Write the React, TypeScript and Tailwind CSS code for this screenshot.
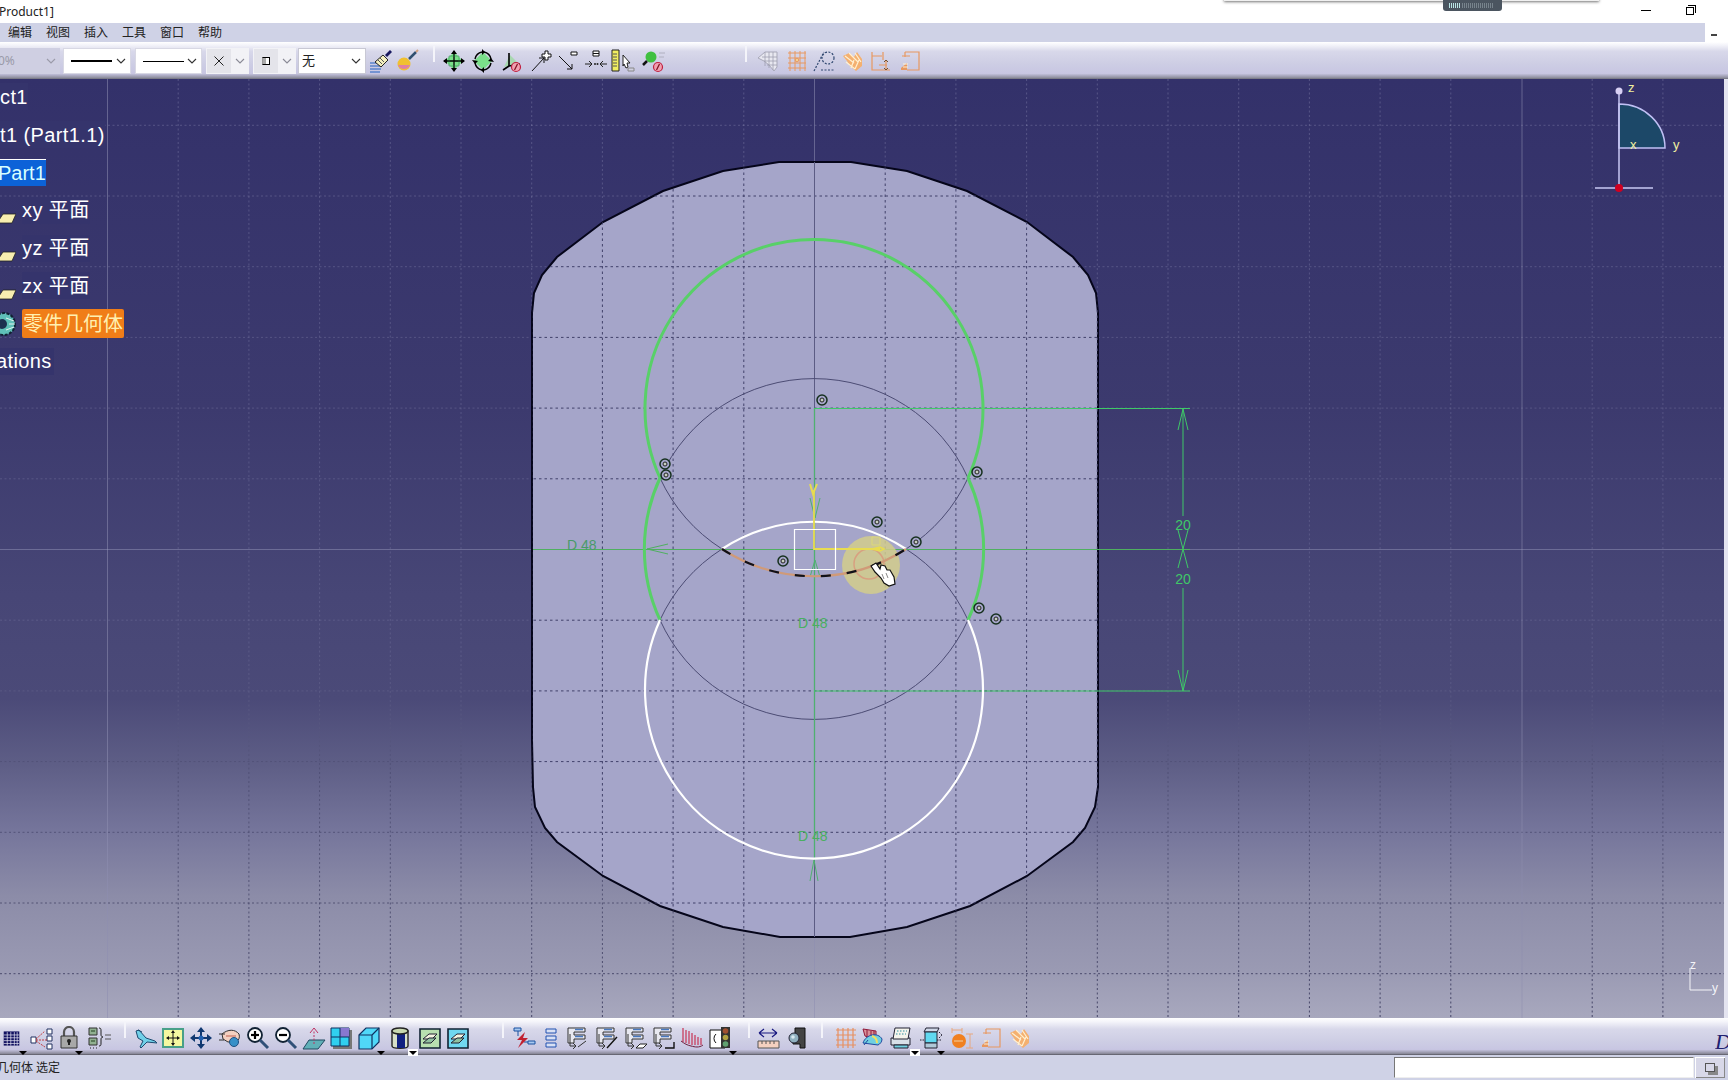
import React from "react";

const uiFont = "font-['Noto_Sans','Noto_Sans_CJK_SC',sans-serif]";

const Svg: React.FC<{ children: React.ReactNode }> = ({ children }) => (
  <svg width={24} height={24} viewBox="0 0 24 24" fill="none" className="shrink-0">
    {children}
  </svg>
);

const Slot: React.FC<{ className: string; caret?: boolean; caretBg?: boolean; children: React.ReactNode }> = ({
  className,
  caret,
  caretBg,
  children,
}) => (
  <div className={`relative flex h-[24px] shrink-0 items-center justify-center ${className}`}>
    {children}
    {caret && (
      <span
        className={`absolute right-[-2px] bottom-[-6px] flex h-[7px] w-[10px] items-center justify-center ${
          caretBg ? "bg-white" : ""
        }`}
      >
        <span className="h-0 w-0 border-x-[4px] border-t-[4px] border-x-transparent border-t-black" />
      </span>
    )}
  </div>
);

const Sep: React.FC<{ className: string }> = ({ className }) => (
  <div className={`h-[16px] w-[2px] shrink-0 self-start bg-[#f4f4fa] ${className}`} />
);

const Forbid = ({ x = 17, y = 18 }: { x?: number; y?: number }) => (
  <g>
    <circle cx={x} cy={y} r={4.5} fill="#f0a0b0" stroke="#c02040" strokeWidth={1.2} />
    <path d={`M${x - 1.5} ${y + 3}l3 -6`} stroke="#801020" strokeWidth={1.2} />
  </g>
);

const IconBrush = () => (
  <Svg>
    <path d="M1 14h13M1 17h12M1 20h11M1 23h10" stroke="#2060c0" />
    <path d="M6 13l8-7 5 5-7 7z" fill="#f4f0c0" stroke="#222" />
    <path d="M9 11l4 4M11 9l4 4" stroke="#555" />
    <path d="M16 6l5-5 2 2-5 5z" fill="#181860" />
  </Svg>
);
const IconBall = () => (
  <Svg>
    <circle cx={8} cy={15} r={6.5} fill="#f0c030" />
    <path d="M2 16a6.5 6.5 0 0 0 12 0z" fill="#e080a0" />
    <path d="M13 10l7-7" stroke="#305070" strokeWidth={2.5} />
    <path d="M20 3l2-2" stroke="#d0a080" strokeWidth={2} />
  </Svg>
);
const IconMove = () => (
  <Svg>
    <path d="M12 3l9 9-9 9-9-9z" fill="#7adf8a" />
    <path d="M12 2v20M2 12h20" stroke="#000" strokeWidth={1.3} />
    <path d="M12 1l-3 4h6zM12 23l-3-4h6zM1 12l4-3v6zM23 12l-4-3v6z" fill="#000" />
    <path d="M7 7h10v10H7z" stroke="#208040" strokeWidth={0.5} />
  </Svg>
);
const IconRotate = () => (
  <Svg>
    <path d="M12 3l9 9-9 9-9-9z" fill="#7adf8a" />
    <path d="M4 10a9 9 0 0 1 7-7M13 3a9 9 0 0 1 7 7M20 14a9 9 0 0 1-7 7M11 21a9 9 0 0 1-7-7" stroke="#000" strokeWidth={1.4} />
    <path d="M11 0l3 3-3 3zM1 11l6 1-3 3zM23 13l-6-1 3-3zM13 24l-3-3 3-3z" fill="#000" />
  </Svg>
);
const IconAxisForbid = () => (
  <Svg>
    <path d="M3 18L9 6l9 9z" fill="#a8d8b0" />
    <path d="M8 17V4M8 17l11-2M8 17l-6 4" stroke="#000" strokeWidth={1.6} />
    <Forbid x={15} y={18} />
  </Svg>
);
const IconArrowPlus = () => (
  <Svg>
    <path d="M3 22L15 9M15 9h-5M15 9v5" stroke="#111" />
    <path d="M16 2h3v3h3v3h-3v3h-3V8h-3V5h3z" fill="#fff" stroke="#111" />
  </Svg>
);
const IconArrowMinus = () => (
  <Svg>
    <path d="M3 7l13 13M16 20h-5M16 20v-5" stroke="#111" />
    <path d="M15 3h6v3h-6z" fill="#fff" stroke="#111" />
  </Svg>
);
const IconEqual = () => (
  <Svg>
    <path d="M9 2h6v5H9zM9 4.500h6" fill="#fff" stroke="#111" />
    <path d="M1 15h7M5 12l3 3-3 3M23 15h-7M19 12l-3 3 3 3" stroke="#222" />
    <circle cx={11} cy={15} r={1} fill="#222" />
    <circle cx={13.500} cy={15} r={1} fill="#222" />
  </Svg>
);
const IconRuler = () => (
  <Svg>
    <path d="M1 1h7v21H1z" fill="#f0ee60" stroke="#222" />
    <path d="M2 5h4M2 8h4M2 11h4M2 14h4M2 17h4" stroke="#555" />
    <path d="M12 6l7 8h-3l1 4-2 1-2-4-1 2z" fill="#fff" stroke="#222" />
    <path d="M17 19h6v3h-6z" fill="#d0d0e0" stroke="#888" />
  </Svg>
);
const IconMagForbid = () => (
  <Svg>
    <circle cx={9} cy={8} r={5.500} fill="#40c040" />
    <path d="M5 12l-4 4" stroke="#111" strokeWidth={2.500} />
    <path d="M17 4h6M17 8h5" stroke="#b0b0c0" />
    <Forbid x={16} y={18} />
  </Svg>
);
const IconMesh = () => (
  <Svg>
    <path d="M2 9l7-6h12v15l-3 4-5-6-5-4z" fill="#e8e8f0" stroke="#a8a8b8" />
    <path d="M9 3v14M13 3v16M17 3v18M6 8h15M8 12h13M11 16h10" stroke="#a0a0b0" strokeWidth={0.8} />
  </Svg>
);
const IconGridOrange = () => (
  <Svg>
    <path d="M3 4h18M3 9h18M3 14h18M3 19h18M5 2v20M10 2v20M15 2v20M20 2v20" stroke="#e89860" />
    <circle cx={12} cy={11} r={1.800} fill="#f4d090" stroke="#e89860" />
  </Svg>
);
const IconDotted = () => (
  <Svg>
    <path d="M2 22L12 3M9 21h14" stroke="#304870" strokeWidth={1.200} strokeDasharray="2 1.500" />
    <circle cx={16} cy={9} r={6} stroke="#304870" strokeWidth={1.200} strokeDasharray="2 1.500" />
  </Svg>
);
const IconOrangeHand = () => (
  <Svg>
    <path d="M2 7l6-3 5 4 3-5 5 7v7l-6 5-6-5-3-5z" fill="#f4b070" />
    <path d="M4 7l9 7M8 4l9 9M14 4l6 9M5 13l9 7M13 11l-3 8M18 11l-4 9" stroke="#fff0d0" strokeWidth={1.200} />
  </Svg>
);
const IconDimOrange = () => (
  <Svg>
    <path d="M3 3v18h18M3 7h10M14 3v8M17 12v9M10 16h8" stroke="#e89860" strokeWidth={1.200} />
    <path d="M15 13l2-2 2 2M15 19l2 2 2-2" stroke="#705030" />
  </Svg>
);
const IconDimOrange2 = () => (
  <Svg>
    <path d="M6 3h14v18H8M3 7h8M20 8v8M6 3v5" stroke="#e89860" strokeWidth={1.200} />
    <path d="M2 19l6-5v7H2z" fill="#e89860" />
    <path d="M4 15h5M4 18h5" stroke="#fff0d0" />
  </Svg>
);
const IconTable = () => (
  <svg width={17} height={17} viewBox="0 0 24 24" fill="none" className="shrink-0">
    <path d="M1 2h22v20H1z" fill="#101060" />
    <path d="M1 7h22M1 11h22M1 15h22M1 19h22M6 3v19M11 3v19M16 3v19M20 3v19" stroke="#e8e8f4" />
  </svg>
);
const IconTree = () => (
  <Svg>
    <path d="M2 11h5v6H2zM18 3h5v5h-5zM18 10h5v5h-5zM18 18h5v5h-5z" fill="#fff" stroke="#203060" />
    <path d="M7 14h11M7 13l9-8M7 15l9 6" stroke="#c03030" strokeWidth={0.900} strokeDasharray="2 1" />
  </Svg>
);
const IconLock = () => (
  <Svg>
    <path d="M7 10V6a5 5 0 0 1 10 0v4" stroke="#555" strokeWidth={2.200} />
    <path d="M4 10h16v12H4z" fill="#a8a8a8" stroke="#333" />
    <circle cx={12} cy={15} r={2} fill="#222" />
    <path d="M11 15h2v4h-2z" fill="#222" />
  </Svg>
);
const IconBrace = () => (
  <Svg>
    <path d="M1 2h8v7H1zM1 12h8v7H1z" fill="#90b090" stroke="#333" />
    <path d="M3 5h4M3 15h4" stroke="#204020" />
    <path d="M2 22h1M5 22h1M8 22h1" stroke="#222" />
    <path d="M11 2c2 0 2 1 2 3v4c0 1 1 2 2 2-1 0-2 1-2 2v4c0 2 0 3-2 3" stroke="#222" />
    <path d="M17 9h6M17 13h6" stroke="#555" />
  </Svg>
);
const IconPlane = () => (
  <Svg>
    <path d="M2 5l3-1 7 8 9 3 2 2-10-1-6 6-1-1 3-6-5-3z" fill="#70d0e8" stroke="#1c4a70" />
    <path d="M4 4l4 2" stroke="#1c4a70" />
  </Svg>
);
const IconFit = () => (
  <Svg>
    <path d="M2 3h20v18H2z" fill="#f4f8a0" stroke="#48a088" strokeWidth={2} />
    <path d="M12 6v12M7 12h10" stroke="#111" />
    <path d="M12 4l-2 3h4zM12 20l-2-3h4zM5 12l3-2v4zM19 12l-3-2v4z" fill="#111" />
  </Svg>
);
const IconMoveBlue = () => (
  <Svg>
    <path d="M12 4v16M4 12h16" stroke="#103870" strokeWidth={2} />
    <path d="M12 1l-4 5h8zM12 23l-4-5h8zM1 12l5-4v8zM23 12l-5-4v8z" fill="#103870" />
    <circle cx={12} cy={12} r={2.500} fill="#2060b0" />
  </Svg>
);
const IconHandRotate = () => (
  <Svg>
    <path d="M4 8c6-5 13-5 17 0 1 3 0 6-2 7l-9 1-5-3z" fill="#f4d0c0" stroke="#333" />
    <path d="M1 8h6M1 14h5" stroke="#333" />
    <path d="M8 10h10" stroke="#c06050" />
    <circle cx={16} cy={16} r={4.500} fill="#3890c8" stroke="#205080" />
  </Svg>
);
const IconZoom = ({ plus }: { plus?: boolean }) => (
  <Svg>
    <circle cx={9} cy={9} r={7} fill="#fff" stroke="#123" strokeWidth={1.800} />
    <path d="M5 9h8" stroke="#000" strokeWidth={2.200} />
    {plus && <path d="M9 5v8" stroke="#000" strokeWidth={2.200} />}
    <path d="M14 14l8 8" stroke="#305078" strokeWidth={3} />
  </Svg>
);
const IconPlaneNormal = () => (
  <Svg>
    <path d="M1 23l6-9h16l-7 9z" fill="#60b0b8" stroke="#204860" />
    <path d="M12 18V5" stroke="#c03060" strokeDasharray="2 1.500" />
    <path d="M8 7l4-5 4 5" stroke="#c03060" />
  </Svg>
);
const IconFourView = () => (
  <Svg>
    <path d="M4 4h19v19H4z" fill="#777" />
    <path d="M2 2h18v18H2z" fill="#30d0f0" stroke="#103060" />
    <path d="M11 2h9v9h-9z" fill="#8878d0" />
    <path d="M11 2v18M2 11h18" stroke="#103060" />
  </Svg>
);
const IconCube = () => (
  <Svg>
    <path d="M2 9l7-7h13v14l-7 7H2z" fill="#50d8f8" stroke="#103060" strokeWidth={1.200} />
    <path d="M2 9h13v14M15 9l7-7" stroke="#103060" strokeWidth={1.200} />
  </Svg>
);
const IconCylinder = () => (
  <Svg>
    <path d="M4 5v15c0 3 16 3 16 0V5z" fill="#d8e0c8" stroke="#222" strokeWidth={1.400} />
    <path d="M9 7h8v15H9z" fill="#102080" />
    <ellipse cx={12} cy={5} rx={8} ry={3} fill="#c8d8b0" stroke="#222" strokeWidth={1.400} />
  </Svg>
);
const IconIso = ({ bg }: { bg: string }) => (
  <Svg>
    <path d="M2 3h20v19H2z" fill={bg} stroke="#123" strokeWidth={1.600} />
    <path d="M5 13l6-5h8l-5 5z" fill="#f4f4e0" stroke="#223" />
    <path d="M5 17l6-5h7l-5 5z" fill="#90c0a0" stroke="#223" />
  </Svg>
);
const IconBolt = () => (
  <Svg>
    <path d="M2 2h7v3H2zM16 15h7v3h-7z" fill="#a8c8f0" stroke="#1850a0" />
    <path d="M6 5v5M12 16h4" stroke="#1850a0" />
    <path d="M13 6l-8 8h5l-4 8 10-10h-5z" fill="#c02030" />
  </Svg>
);
const IconBars = () => (
  <Svg>
    <path d="M7 3h10v4H7zM7 10h10v4H7zM7 17h10v4H7z" fill="#d8e0f4" stroke="#2050b0" />
  </Svg>
);
const IconList = ({ extra }: { extra: React.ReactNode }) => (
  <Svg>
    <path d="M2 2h17v4H8v3h11v4H8v4H2z" fill="#e8e8f0" stroke="#333" />
    <path d="M9 3.500h8M9 10.500h8" stroke="#4878c0" strokeWidth={1.500} />
    <path d="M4 8v12h5M7 17l3 3-3 3" stroke="#333" />
    {extra}
  </Svg>
);
const IconWave = () => (
  <Svg>
    <path d="M3 2v14M6 4v13M9 5v13M12 7v12M15 9v10M18 11v8M21 12v7" stroke="#c84060" strokeWidth={1.300} />
    <path d="M1 15c4 3 6 4 10 5s8 2 12-1" stroke="#702040" />
  </Svg>
);
const IconTraffic = () => (
  <Svg>
    <path d="M1 4h15v18H1z" fill="#fff" stroke="#111" />
    <path d="M7 8a6 6 0 0 0 0 9" stroke="#111" />
    <path d="M12 1h9v21h-9z" fill="#333" />
    <circle cx={16.500} cy={5} r={2.800} fill="#a05030" />
    <circle cx={16.500} cy={11.500} r={2.800} fill="#b0a040" />
    <circle cx={16.500} cy={18} r={2.800} fill="#60a070" />
  </Svg>
);
const IconMeasure = () => (
  <Svg>
    <path d="M3 7h18M3 7l5-4M3 7l5 4M21 7l-5-4M21 7l-5 4" stroke="#181880" strokeWidth={1.200} />
    <path d="M2 15h21v7H2z" fill="#f4d0c0" stroke="#555" />
    <path d="M6 15v3M10 15v3M14 15v3M18 15v3" stroke="#555" />
  </Svg>
);
const IconCamera = () => (
  <Svg>
    <path d="M10 2h10v20h-5v-4H8V8h2z" fill="#444" stroke="#111" />
    <circle cx={9} cy={12} r={5} fill="#90b0c0" stroke="#223" />
    <circle cx={8} cy={11} r={1.800} fill="#d8e8f0" />
  </Svg>
);
const IconGridPlain = () => (
  <Svg>
    <path d="M2 4h20M2 9h20M2 14h20M2 19h20M4 2v20M9 2v20M14 2v20M19 2v20" stroke="#e89060" strokeWidth={1.200} />
  </Svg>
);
const IconSurface = () => (
  <Svg>
    <path d="M3 3l13 2v9L5 10z" fill="#d89098" stroke="#901838" />
    <path d="M7 4v8M11 5v8M14 5v8" stroke="#901838" />
    <path d="M3 17C6 8 18 6 22 13c0 3-2 5-4 6z" fill="#70d0e0" stroke="#2048a0" />
    <path d="M12 10c3 1 5 3 5 7" stroke="#f0e060" strokeWidth={2} />
    <path d="M8 14l-4 5" stroke="#2048a0" />
  </Svg>
);
const IconTrayGrid = () => (
  <Svg>
    <path d="M2 12h19v7H2z" fill="#d8e0e8" stroke="#223" />
    <path d="M6 2h15l-2 11H4z" fill="#f4f4ec" stroke="#223" />
    <path d="M8 5h10M7 8h10" stroke="#3090a0" strokeDasharray="1.500 1.500" />
    <path d="M5 19h14v3H5z" fill="#70d0e0" stroke="#223" />
  </Svg>
);
const IconTrayBox = () => (
  <Svg>
    <path d="M7 2h13l-2 4H5z" fill="#d0d8e8" stroke="#223" />
    <path d="M6 6h12v11H6z" fill="#60d8f0" stroke="#223" />
    <path d="M1 14h5M18 14h4M20 6l3 3M20 12l3-3" stroke="#223" strokeDasharray="1.500 1" />
    <path d="M6 17h12v5H6z" fill="#b0c8d8" stroke="#223" />
  </Svg>
);
const IconOrangeBall = () => (
  <Svg>
    <path d="M2 2v5M12 2v5M2 4h10M20 8v14M16 8h7M16 22h7" stroke="#e8a880" />
    <circle cx={9} cy={15} r={7} fill="#f08020" />
    <path d="M4 15h9" stroke="#f4d0a0" />
  </Svg>
);

const Combo: React.FC<{ className: string; inner?: string; children?: React.ReactNode; caret?: string }> = ({
  className,
  inner = "bg-white",
  children,
  caret = "#333",
}) => (
  <div className={`flex h-[26px] shrink-0 items-center ${inner} ${className}`}>
    <div className="flex min-w-0 flex-1 items-center">{children}</div>
    <svg width={12} height={8} viewBox="0 0 12 8" fill="none" className="mr-[3px] shrink-0">
      <path d="M2 2l4 4 4-4" stroke={caret} strokeWidth={1.100} />
    </svg>
  </div>
);

const TopToolbar = () => (
  <div className="flex h-[37px] items-center pt-[1px] bg-[linear-gradient(to_bottom,#ffffff_0%,#f4f4fa_8%,#d8d8ea_25%,#cdcde4_60%,#c8c6e2_85%,#8c8c9c_97%,#6e6e78_100%)]">
    <Combo className="w-[60px]" inner="bg-[#cfcfe2]" caret="#9a9aa8">
      <span className={`ml-[-2px] text-[12px] text-[#9a9aa8] ${uiFont}`}>0%</span>
    </Combo>
    <Combo className="ml-[3px] w-[68px] border border-[#d8d8e4]">
      <div className="ml-[7px] h-[2px] w-[41px] bg-black" />
    </Combo>
    <Combo className="ml-[4px] w-[67px] border border-[#d8d8e4]">
      <div className="ml-[7px] h-px w-[41px] bg-black" />
    </Combo>
    <Combo className="ml-[4px] w-[43px]" inner="bg-[#f2f2f6]" caret="#8a8a96">
      <span className="ml-[1px] flex h-[24px] w-[24px] items-center justify-center bg-[#e4e4ea]">
        <svg width={10} height={10} viewBox="0 0 10 10" fill="none">
          <path d="M0.500 0.500l9 9M9.500 0.500l-9 9" stroke="#222" />
        </svg>
      </span>
    </Combo>
    <Combo className="ml-[4px] w-[43px]" inner="bg-[#f2f2f6]" caret="#8a8a96">
      <span className="ml-[1px] flex h-[24px] w-[24px] items-center justify-center bg-[#e4e4ea]">
        <span className="h-[8px] w-[8px] border border-black border-l-[#999] bg-[linear-gradient(to_right,#aaa_50%,#fff_50%)]" />
      </span>
    </Combo>
    <Combo className="ml-[2px] w-[68px] border border-[#c8c8d4]">
      <span className={`ml-[3px] text-[13px] text-[#222] ${uiFont}`}>无</span>
    </Combo>
    <Slot className="ml-[2px] w-[26px]"><IconBrush /></Slot>
    <Slot className="w-[28px]"><IconBall /></Slot>
    <Sep className="ml-[11px] mt-[3px]" />
    <Slot className="ml-[5px] w-[28px]"><IconMove /></Slot>
    <Slot className="w-[30px]"><IconRotate /></Slot>
    <Slot className="w-[30px]"><IconAxisForbid /></Slot>
    <Slot className="w-[25px]"><IconArrowPlus /></Slot>
    <Slot className="w-[30px]"><IconArrowMinus /></Slot>
    <Slot className="w-[26px]"><IconEqual /></Slot>
    <Slot className="w-[28px]"><IconRuler /></Slot>
    <Slot className="w-[34px]"><IconMagForbid /></Slot>
    <Sep className="ml-[74px] mt-[3px]" />
    <Slot className="ml-[10px] w-[22px]"><IconMesh /></Slot>
    <Slot className="w-[36px]"><IconGridOrange /></Slot>
    <Slot className="w-[18px]"><IconDotted /></Slot>
    <Slot className="w-[40px]"><IconOrangeHand /></Slot>
    <Slot className="w-[16px]"><IconDimOrange /></Slot>
    <Slot className="w-[44px]"><IconDimOrange2 /></Slot>
  </div>
);

const BottomToolbar = () => (
  <div className="flex h-[37px] shrink-0 items-center pt-[3px] bg-[linear-gradient(to_bottom,#ffffff_0%,#f4f4fa_10%,#d8d8ea_30%,#cdcde4_65%,#c8c6e2_85%,#8c8c9c_96%,#55555f_100%)]">
    <Slot className="w-[26px] pr-[4px]" caret><IconTable /></Slot>
    <Slot className="w-[30px]"><IconTree /></Slot>
    <Slot className="w-[26px]" caret><IconLock /></Slot>
    <Slot className="ml-[4px] w-[28px]"><IconBrace /></Slot>
    <Sep className="ml-[10px] mt-[1px]" />
    <Slot className="ml-[6px] w-[28px]"><IconPlane /></Slot>
    <Slot className="w-[26px]"><IconFit /></Slot>
    <Slot className="w-[30px]"><IconMoveBlue /></Slot>
    <Slot className="w-[28px]"><IconHandRotate /></Slot>
    <Slot className="w-[28px]"><IconZoom plus /></Slot>
    <Slot className="w-[28px]"><IconZoom /></Slot>
    <Slot className="w-[28px]"><IconPlaneNormal /></Slot>
    <Slot className="w-[26px]"><IconFourView /></Slot>
    <Slot className="w-[30px]" caret><IconCube /></Slot>
    <Slot className="w-[32px]" caret caretBg><IconCylinder /></Slot>
    <Slot className="w-[28px]"><IconIso bg="#b8e0b0" /></Slot>
    <Slot className="w-[28px]"><IconIso bg="#70d8f0" /></Slot>
    <Sep className="ml-[30px] mt-[1px]" />
    <Slot className="ml-[6px] w-[28px]"><IconBolt /></Slot>
    <Slot className="w-[26px]"><IconBars /></Slot>
    <Slot className="w-[28px]"><IconList extra={<path d="M12 21l8-6" stroke="#333" />} /></Slot>
    <Slot className="w-[30px]"><IconList extra={<path d="M12 22l10-11" stroke="#111" strokeWidth={1.400} />} /></Slot>
    <Slot className="w-[28px]"><IconList extra={<path d="M12 22l4-4h7l-4 4z" fill="#fff" stroke="#222" />} /></Slot>
    <Slot className="w-[28px]"><IconList extra={<path d="M13 22h9v-6" stroke="#111" strokeWidth={1.400} />} /></Slot>
    <Slot className="w-[28px]"><IconWave /></Slot>
    <Slot className="w-[30px]" caret><IconTraffic /></Slot>
    <Sep className="ml-[12px] mt-[1px]" />
    <Slot className="ml-[4px] w-[28px]"><IconMeasure /></Slot>
    <Slot className="w-[30px]"><IconCamera /></Slot>
    <Sep className="ml-[9px] mt-[1px]" />
    <Slot className="ml-[9px] w-[28px]"><IconGridPlain /></Slot>
    <Slot className="w-[24px]"><IconSurface /></Slot>
    <Slot className="w-[34px]" caret caretBg><IconTrayGrid /></Slot>
    <Slot className="w-[26px]" caret><IconTrayBox /></Slot>
    <Slot className="w-[36px]"><IconOrangeBall /></Slot>
    <Slot className="w-[24px]"><IconDimOrange2 /></Slot>
    <Slot className="w-[32px]"><IconOrangeHand /></Slot>
    <div className="ml-auto flex h-[30px] w-[13px] shrink-0 items-end overflow-hidden">
      <span className="font-['Liberation_Serif',serif] text-[22px] leading-none text-[#202070] italic">D</span>
    </div>
  </div>
);

const PlaneGlyph = () => (
  <svg width={16} height={12} viewBox="0 0 16 12" className="mt-[16px] shrink-0">
    <path d="M-3 11L3 2h13l-4 9z" fill="#f8eeb0" stroke="#222" strokeWidth={0.800} />
  </svg>
);

const GearGlyph = () => (
  <svg width={18} height={28} viewBox="0 0 18 28" className="shrink-0">
    <circle cx={4} cy={14} r={11} fill="#5fc0b8" stroke="#123" strokeWidth={2} strokeDasharray="3 1.500" />
    <circle cx={2} cy={14} r={5} fill="#1c3050" />
    <path d="M6 8l8 3M6 20l8-3M9 14h6" stroke="#e0f4f0" />
  </svg>
);

const treeRow = "flex h-[37.800px] items-center";
const treeText = "flex h-[27px] items-center bg-[#35346c] text-[20px] leading-none tracking-[0.400px] text-white";

const Tree = () => (
  <div className="absolute top-[-1px] left-0 flex flex-col font-['Liberation_Sans','Noto_Sans_CJK_SC',sans-serif]">
    <div className={treeRow}><span className={treeText}>ct1</span></div>
    <div className={treeRow}><span className={treeText}>t1 (Part1.1)</span></div>
    <div className={treeRow}>
      <span className="flex h-[27px] w-[46px] items-center overflow-hidden border-t border-white bg-[#0c62d8] text-[20px] leading-none text-[#d8ffff]">
        <span className="ml-[-2px]">Part1</span>
      </span>
    </div>
    <div className={treeRow}><PlaneGlyph /><span className={`ml-[6px] ${treeText}`}>xy 平面</span></div>
    <div className={treeRow}><PlaneGlyph /><span className={`ml-[6px] ${treeText}`}>yz 平面</span></div>
    <div className={treeRow}><PlaneGlyph /><span className={`ml-[6px] ${treeText}`}>zx 平面</span></div>
    <div className={treeRow}>
      <GearGlyph />
      <span className="ml-[4px] flex h-[29px] w-[102px] items-center justify-center rounded-[2px] bg-[#f07d18] text-[20px] leading-none text-[#fff0b0]">
        零件几何体
      </span>
    </div>
    <div className={treeRow}>
      <span className={`ml-[-4px] pr-[2px] ${treeText}`}>ations</span>
    </div>
  </div>
);

const Glyph = ({ x, y }: { x: number; y: number }) => (
  <g>
    <circle cx={x} cy={y} r={5} fill="#a5a5c9" stroke="#16301e" strokeWidth={1.500} />
    <circle cx={x} cy={y} r={2} fill="#c8d0c0" stroke="#222" />
  </g>
);

// screen grid is centred on the sketch origin, solid every 10 cells
const gridX = Array.from({ length: 23 }, (_, i) => 814.5 + (i - 10) * 70.7).filter((_, i) => i !== 0 && i !== 10 && i !== 20);
const gridY = Array.from({ length: 13 }, (_, i) => 549.5 + (i - 6) * 70.7).filter((_, i) => i !== 6);

const partPath =
  "M779 162H851L907 171L967 191L1027 222L1073 257L1088 275L1096 293L1098 313V787L1095 807L1085 828L1073 842L1027 876L970 906L907 927L850 937H780L723 927L660 906L603 876L557 842L545 828L535 807L533 787L532 740V313L534 293L542 275L557 257L603 222L663 191L723 171Z";

const Viewport = () => (
  <div className="relative min-h-0 flex-1 overflow-hidden bg-[linear-gradient(to_bottom,#33316a_0%,#3c3a6e_35%,#474676_55%,#4b4a78_66%,#5e5e86_73%,#75759b_80%,#8c8ca8_87%,#9a9ab3_95%,#a8a8be_100%)]">
    <svg viewBox="0 79 1728 939" className="block h-full w-full" fill="none">
      <defs>
        <linearGradient id="gridStroke" gradientUnits="userSpaceOnUse" x1={0} y1={79} x2={0} y2={1018}>
          <stop offset="0" stopColor="#b0b0d0" stopOpacity="0.28" />
          <stop offset="0.6" stopColor="#a0a0c4" stopOpacity="0.2" />
          <stop offset="0.74" stopColor="#38385c" stopOpacity="0.45" />
          <stop offset="1" stopColor="#38385c" stopOpacity="0.9" />
        </linearGradient>
        <clipPath id="partClip">
          <path d={partPath} />
        </clipPath>
      </defs>

      {gridX.map((x) => (
        <path key={x} d={`M${x} 79V1018`} stroke="url(#gridStroke)" strokeDasharray="2 2.500" />
      ))}
      {gridY.map((y) => (
        <path key={y} d={`M0 ${y}H1728`} stroke="url(#gridStroke)" strokeDasharray="2 2.500" />
      ))}
      <path d="M107.500 79V1018M1522 79V1018M814.500 79V1018" stroke="#8e8eb0" strokeOpacity={0.55} />
      <path d="M0 549.500H1728" stroke="#9ea0c0" strokeOpacity={0.45} />

      {/* part */}
      <path d={partPath} fill="#a5a5c9" stroke="#05051a" strokeWidth={2} />
      <g clipPath="url(#partClip)">
        {gridX.map((x) => (
          <path key={x} d={`M${x} 79V1018`} stroke="#40406a" strokeDasharray="2.500 3" />
        ))}
        {gridY.map((y) => (
          <path key={y} d={`M0 ${y}H1728`} stroke="#40406a" strokeDasharray="2.500 3" />
        ))}
        <path d="M814.500 79V1018" stroke="#5c5c84" />
      </g>

      {/* thin construction arcs */}
      <path
        d="M660 478A169 169 0 0 1 968 478M660 620A169 169 0 0 0 968 620M660 478A169 169 0 0 0 722 549M906 549A169 169 0 0 0 968 478M722 549A169 169 0 0 0 660 620M906 549A169 169 0 0 1 968 620"
        stroke="#4c4c74"
      />

      {/* dimension lines */}
      <path d="M533 549.500H1190" stroke="#4fb060" />
      <path d="M814.500 408V860" stroke="#4fb070" strokeWidth={1.300} />
      <path d="M814 408.500H1190M814 691H1190" stroke="#3fc868" />
      <path d="M1183 409V516M1183 588V691" stroke="#3fc868" />
      <path d="M1178 430L1183 409L1188 430M1178 670L1183 691L1188 670M1178 530L1183 549L1188 530M1178 568L1183 549L1188 568" stroke="#3fc868" />
      <path d="M647 549L668 544M647 549L668 554" stroke="#4fb060" />
      <path d="M810 881L814 860L818 881" stroke="#4fb070" />
      <path d="M810 498L815 518L820 498M810 577L815 560L820 577" stroke="#4fb070" />

      {/* profile */}
      <path d="M660 478A169 169 0 1 1 968 478M660 478A169 169 0 0 0 660 620M968 478A169 169 0 0 1 968 620" stroke="#58d068" strokeWidth={3} />
      <path d="M660 620A169 169 0 1 0 968 620M722 549A169 169 0 0 1 906 549" stroke="#ffffff" strokeWidth={2.200} />

      {/* hover highlight */}
      <circle cx={871} cy={565} r={29} fill="#d2cc8c" fillOpacity={0.85} />
      <circle cx={869} cy={564} r={15} stroke="#d8a080" strokeWidth={1.500} />
      <path d="M722 549A169 169 0 0 0 906 549" stroke="#d09a78" strokeWidth={2.200} />
      <path d="M722 549A169 169 0 0 0 906 549" stroke="#101018" strokeWidth={2.200} strokeDasharray="10 16" />

      {/* sketch axes */}
      <path d="M814 490V549H880" stroke="#e8dc50" strokeWidth={1.800} />
      <path d="M810 484L813 494L817 484" stroke="#e8dc50" strokeWidth={2} />
      <path d="M872 549L880 547L884 549L880 551Z" stroke="#e8dc50" strokeWidth={1.500} />
      <path d="M872 537H880V545H872Z" stroke="#dcd878" />
      <path d="M794.500 529.500H835.500V569.500H794.500Z" stroke="#ffffff" strokeWidth={1.200} />

      <Glyph x={822} y={400} />
      <Glyph x={665} y={464} />
      <Glyph x={666} y={475} />
      <Glyph x={977} y={472} />
      <Glyph x={877} y={522} />
      <Glyph x={916} y={542} />
      <Glyph x={783} y={561} />
      <Glyph x={979} y={608} />
      <Glyph x={996} y={619} />

      {/* dimension values */}
      <g className="font-['Liberation_Sans',sans-serif]" fontSize={14}>
        <text x={567} y={550} fill="#4a9a6a">D 48</text>
        <text x={798} y={628} fill="#4ab060">D 48</text>
        <text x={798} y={841} fill="#4ab060">D 48</text>
        <text x={1183} y={530} fill="#3fc868" textAnchor="middle">20</text>
        <text x={1183} y={584} fill="#3fc868" textAnchor="middle">20</text>
      </g>

      {/* hand cursor */}
      <path
        d="M871 566L876 563L880 569L881 565L885 566L887 570L890 570L894 577L895 584L889 586L884 583L881 578L875 572Z"
        fill="#ffffff"
        stroke="#111"
        strokeWidth={1.200}
      />
      <path d="M882 574l2 5M886 573l2 5" stroke="#555" strokeWidth={0.700} />

      {/* top right compass */}
      <path d="M1619 104A46 44 0 0 1 1665 148H1619Z" fill="#1c4868" stroke="#c0c0f4" strokeWidth={1.500} />
      <path d="M1619 91V188M1595 188H1653" stroke="#c8c8f4" strokeWidth={1.500} />
      <circle cx={1619} cy={91} r={3.500} fill="#d8d0f4" />
      <circle cx={1619} cy={188} r={4} fill="#d00020" />
      <g className="font-['Liberation_Sans',sans-serif]" fontSize={13} fill="#f0f0a0">
        <text x={1628} y={92}>z</text>
        <text x={1630} y={149}>x</text>
        <text x={1673} y={149}>y</text>
      </g>

      {/* bottom right compass */}
      <path d="M1690 968V990H1712" stroke="#f4f4f8" />
      <g className="font-['Liberation_Sans',sans-serif]" fontSize={12} fill="#f4f4f8">
        <text x={1690} y={969}>z</text>
        <text x={1712} y={992}>y</text>
      </g>
    </svg>
    <Tree />
    <div className="absolute top-0 right-0 bottom-0 w-[4px] bg-[#e4e4f0]" />
  </div>
);

const App: React.FC = () => {
  return (
    <div className={`flex h-[1080px] w-[1728px] flex-col overflow-hidden bg-white ${uiFont}`}>
      {/* title bar */}
      <div className="relative flex h-[23px] shrink-0 items-center bg-white">
        <span className="ml-[-1px] text-[12px] text-[#222]">Product1]</span>
        <div className="absolute top-[-6px] left-[1224px] h-[7px] w-[375px] bg-[#f0f0f0] shadow-[0_1px_3px_rgba(0,0,0,0.55)]" />
        <div className="absolute top-0 left-[1443px] flex h-[11px] w-[59px] items-center gap-px rounded-b-[3px] bg-[#4b5560] px-[6px]">
          <div className="h-[5px] w-[12px] bg-[repeating-linear-gradient(to_right,#b8e4e4_0,#b8e4e4_1px,transparent_1px,transparent_2px)]" />
          <div className="h-[5px] w-[32px] bg-[repeating-linear-gradient(to_right,#77838c_0,#77838c_1px,transparent_1px,transparent_2px)]" />
        </div>
        <div className="absolute top-[10px] left-[1641px] h-px w-[10px] bg-black" />
        <div className="absolute top-[7px] left-[1686px] h-[8px] w-[8px] border border-black bg-white" />
        <div className="absolute top-[5px] left-[1688px] h-[8px] w-[8px] border-t border-r border-black" />
      </div>

      {/* menu bar */}
      <div className="flex h-[19px] shrink-0 items-center bg-white">
        <div className="flex h-full w-[1705px] items-center gap-[14px] bg-[#cfd2e6] pl-[8px] text-[12px] leading-none text-[#222]">
          <span>编辑</span>
          <span>视图</span>
          <span>插入</span>
          <span>工具</span>
          <span>窗口</span>
          <span>帮助</span>
        </div>
        <div className="ml-px flex h-full w-[16px] items-center justify-center bg-white">
          <div className="mt-[4px] h-[2px] w-[6px] bg-[#444]" />
        </div>
      </div>

      <TopToolbar />
      <Viewport />
      <BottomToolbar />

      {/* status bar */}
      <div className="flex h-[25px] shrink-0 items-center bg-[#cfd2e6]">
        <span className="ml-[-3px] text-[12px] text-[#222]">几何体 选定</span>
        <div className="ml-auto mr-[3px] flex h-[21px] items-center">
          <div className="h-[21px] w-[300px] border border-t-[#777] border-l-[#777] border-r-[#eee] border-b-[#eee] bg-white" />
          <div className="ml-px flex h-[21px] w-[30px] items-center justify-center bg-[#d8d8e8] shadow-[inset_1px_1px_0_#fff,inset_-1px_-1px_0_#888]">
            <div className="h-[9px] w-[10px] border border-[#555] shadow-[3px_3px_0_#888]" />
          </div>
        </div>
      </div>
    </div>
  );
};

export default App;
